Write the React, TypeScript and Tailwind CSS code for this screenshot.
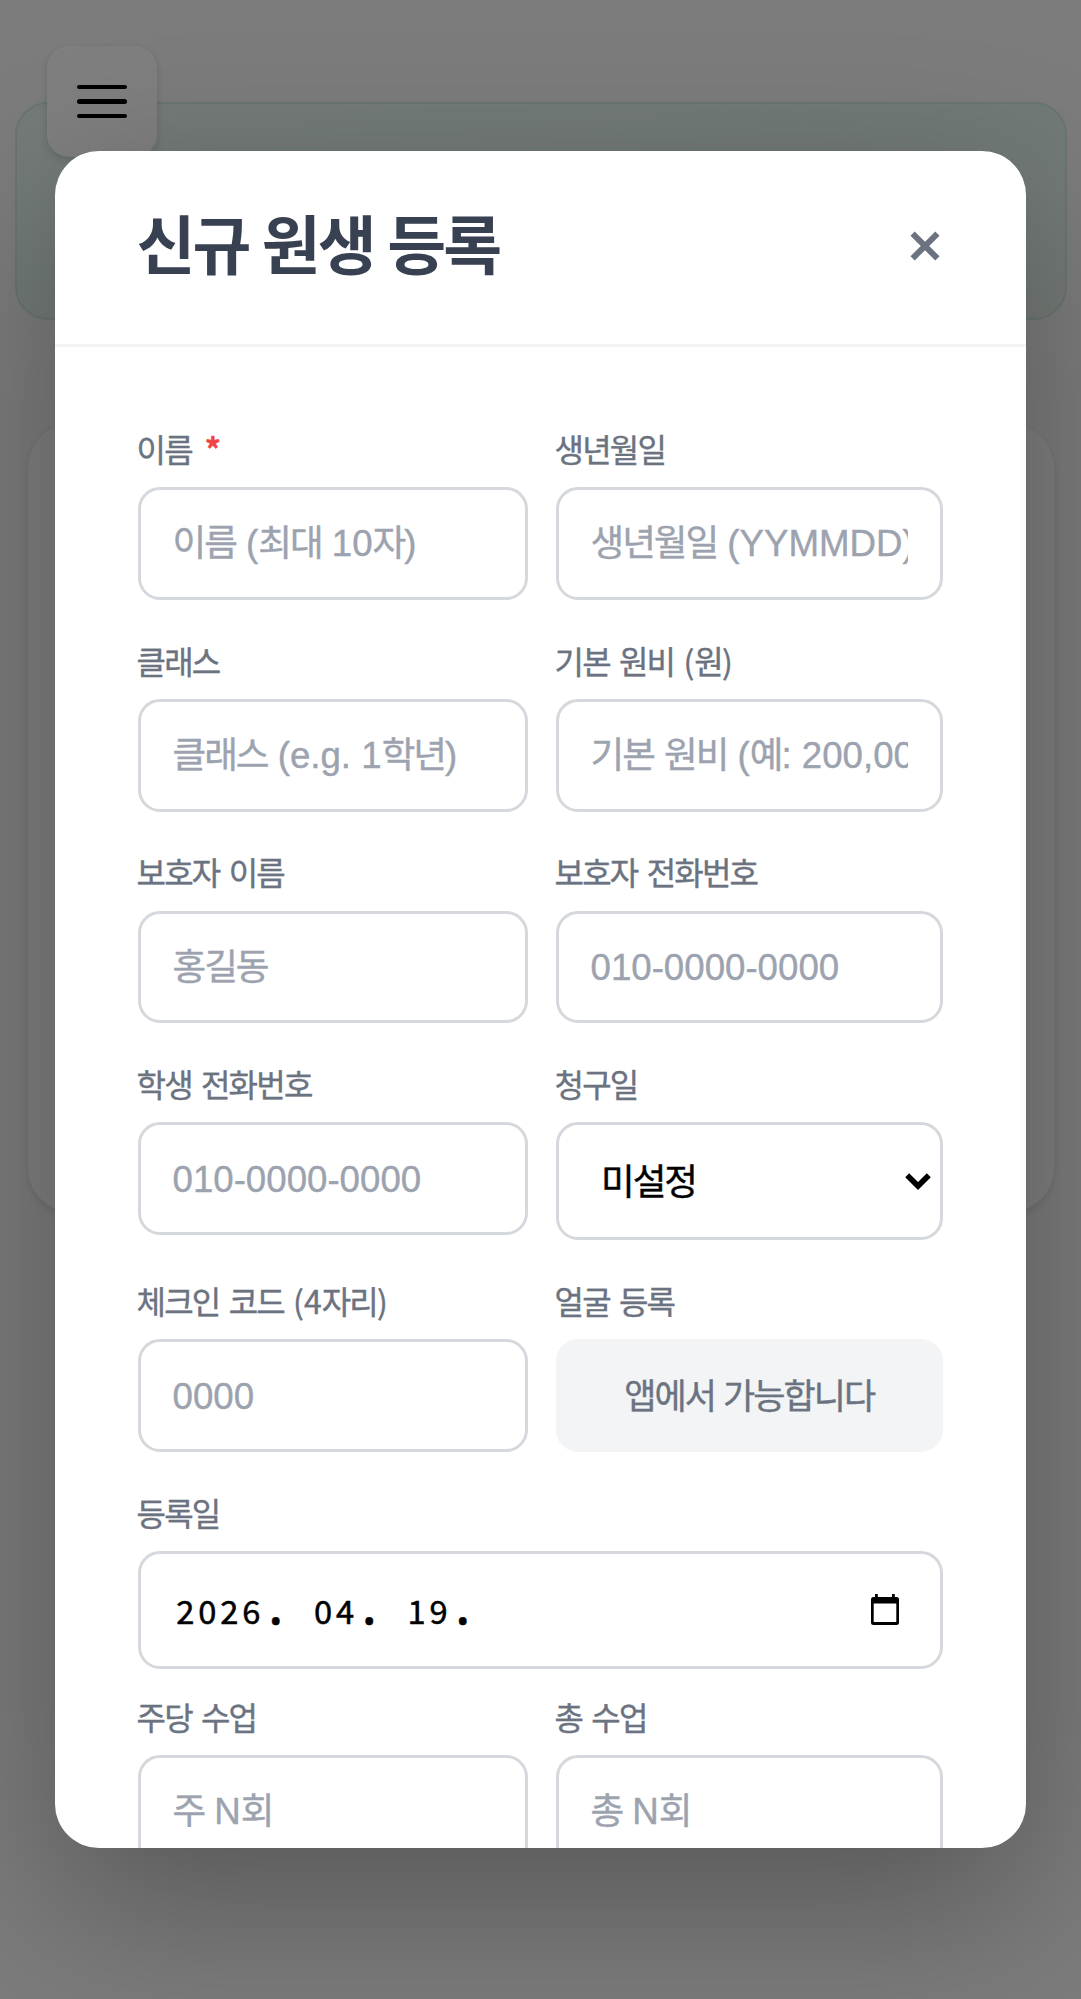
import type { ReactNode } from "react";

const HANGUL = /([\u3131-\uD79D]+)/;

/* Sets Hangul runs a little tighter than the Latin text around them. */
function Mixed({ text, title = false }: { text: string; title?: boolean }) {
  return (
    <>
      {text.split(HANGUL).map((run, i) =>
        HANGUL.test(run) ? (
          <span key={i} className={title ? "tracking-[-0.045em]" : "tracking-[-0.056em]"}>
            {run}
          </span>
        ) : (
          run
        ),
      )}
    </>
  );
}

function Field({
  label,
  required,
  children,
}: {
  label: string;
  required?: boolean;
  children: ReactNode;
}) {
  return (
    <div className="flex min-w-0 flex-col">
      <div className="mb-[16.25px] -ml-px flex h-[43px] items-center pb-[3px] whitespace-pre text-[32px] leading-[40px] text-[#6b7280] [-webkit-text-stroke:0.4px] [word-spacing:2px]">
        <span>
          <Mixed text={label} />
          {required && <span className="ml-[13px] font-bold text-[#ef4444]">*</span>}
        </span>
      </div>
      {children}
    </div>
  );
}

function TextBox({ placeholder }: { placeholder: string }) {
  return (
    <div className="flex h-[112.75px] items-center rounded-[22px] border-[3px] border-[#d5d8dc] bg-white px-[32px] pt-[2px]">
      <div className="w-full overflow-hidden whitespace-pre font-['Liberation_Sans','Noto_Sans_CJK_KR',sans-serif] text-[36.67px] leading-[54px] text-[#9ca3af] [-webkit-text-stroke:0.4px]">
        <Mixed text={placeholder} />
      </div>
    </div>
  );
}

function Row({ children }: { children: ReactNode }) {
  return <div className="grid grid-cols-[390.5px_387.5px] gap-x-[27.5px]">{children}</div>;
}

function DatePart({ children }: { children: string }) {
  return (
    <>
      <span className="px-[2.75px] tracking-[3.9px]">{children}</span>
      <span className="inline-block w-[44px] pl-[2px] text-[40px] leading-none font-bold">.</span>
    </>
  );
}

export default function App() {
  return (
    <div className="relative h-[1999px] w-[1081px] overflow-hidden bg-[#f8f9fa] font-['Noto_Sans_CJK_KR',sans-serif]">
      {/* Page behind the dialog */}
      <div className="flex flex-col pt-[102px]">
        <div className="mx-[14.5px] h-[218px] rounded-[33px] border-2 border-[#d3eae2] bg-linear-to-br from-[#eaf7f3] via-[#e4f5ee] to-[#eaf5ee]" />
        <div className="mx-[27.5px] mt-[104px] h-[788px] rounded-[44px] bg-white shadow-[0_3px_8px_rgba(0,0,0,0.12)]" />
      </div>
      <button className="absolute top-[46px] left-[46.5px] flex h-[111px] w-[110px] flex-col items-center justify-center gap-[9.8px] rounded-[22px] bg-white shadow-[0_3px_8px_rgba(0,0,0,0.15)]">
        <span className="h-[4.8px] w-[50px] rounded-full bg-black" />
        <span className="h-[4.8px] w-[50px] rounded-full bg-black" />
        <span className="h-[4.8px] w-[50px] rounded-full bg-black" />
      </button>

      {/* Overlay and dialog */}
      <div className="absolute inset-0 flex items-start justify-center bg-black/50 pt-[151px]">
        <div className="h-[1697px] w-[971px] overflow-hidden rounded-[44px] bg-white shadow-[0_55px_165px_rgba(0,0,0,0.3)]">
          <div className="flex h-[196px] items-center justify-between border-b-[3px] border-[#f3f4f6] px-[82.5px] pb-[13px]">
            <h2 className="-ml-px text-[64px] leading-none font-bold whitespace-pre text-[#374151] [word-spacing:-1.2px]">
              <Mixed text="신규 원생 등록" title />
            </h2>
            <svg className="mt-[10px] mr-[4px] size-[30px]" viewBox="0 0 30 30" fill="none" stroke="#6b7280" strokeWidth="6">
              <path d="M2.6 2.6 27.4 27.4M27.4 2.6 2.6 27.4" />
            </svg>
          </div>

          <div className="flex flex-col gap-[39.75px] pt-[80.75px] pr-[83px] pl-[82.5px]">
            <Row>
              <Field label="이름" required>
                <TextBox placeholder="이름 (최대 10자)" />
              </Field>
              <Field label="생년월일">
                <TextBox placeholder="생년월일 (YYMMDD)" />
              </Field>
            </Row>
            <Row>
              <Field label="클래스">
                <TextBox placeholder="클래스 (e.g. 1학년)" />
              </Field>
              <Field label="기본 원비 (원)">
                <TextBox placeholder="기본 원비 (예: 200,000)" />
              </Field>
            </Row>
            <Row>
              <Field label="보호자 이름">
                <TextBox placeholder="홍길동" />
              </Field>
              <Field label="보호자 전화번호">
                <TextBox placeholder="010-0000-0000" />
              </Field>
            </Row>
            <Row>
              <Field label="학생 전화번호">
                <TextBox placeholder="010-0000-0000" />
              </Field>
              <Field label="청구일">
                <div className="flex h-[118px] items-center justify-between rounded-[22px] border-[3px] border-[#d5d8dc] bg-white pr-[9px] pl-[42.5px] text-[36.67px] leading-[54px] text-black [-webkit-text-stroke:0.4px]">
                  <span className="pb-[5px]">
                    <Mixed text="미설정" />
                  </span>
                  <svg className="h-[17px] w-[26px]" viewBox="0 0 26 17" fill="none" stroke="#000" strokeWidth="5.6">
                    <path d="M2.2 2.2 13 13 23.8 2.2" />
                  </svg>
                </div>
              </Field>
            </Row>
            <Row>
              <Field label="체크인 코드 (4자리)">
                <TextBox placeholder="0000" />
              </Field>
              <Field label="얼굴 등록">
                <div className="flex h-[112.75px] items-center justify-center rounded-[22px] bg-[#f3f4f6] pb-[3px] text-[35px] leading-[50px] text-[#6b7280] [-webkit-text-stroke:0.4px]">
                  <span>
                    <Mixed text="앱에서 가능합니다" />
                  </span>
                </div>
              </Field>
            </Row>
            <Field label="등록일">
              <div className="flex h-[118px] items-center justify-between rounded-[22px] border-[3px] border-[#d5d8dc] bg-white pr-[41px] pl-[33px] text-black">
                <span className="text-[32.7px] leading-[54px] whitespace-pre [-webkit-text-stroke:0.5px]">
                  <DatePart>2026</DatePart>
                  <DatePart>04</DatePart>
                  <DatePart>19</DatePart>
                </span>
                <svg className="mb-[2px] h-[31px] w-[28px]" viewBox="0 0 28 31">
                  <path
                    fillRule="evenodd"
                    d="M4 0h2.8v3H21V0h2.8v3H25.5A2.5 2.5 0 0 1 28 5.5v23a2.5 2.5 0 0 1-2.5 2.500H2.5A2.5 2.5 0 0 1 0 28.500v-23A2.5 2.5 0 0 1 2.5 3H4zM2.700 9.500v18.500h22.600V9.500z"
                  />
                </svg>
              </div>
            </Field>
            <div className="-mt-[13px]">
              <Row>
                <Field label="주당 수업">
                  <TextBox placeholder="주 N회" />
                </Field>
                <Field label="총 수업">
                  <TextBox placeholder="총 N회" />
                </Field>
              </Row>
            </div>
          </div>
        </div>
      </div>
    </div>
  );
}
